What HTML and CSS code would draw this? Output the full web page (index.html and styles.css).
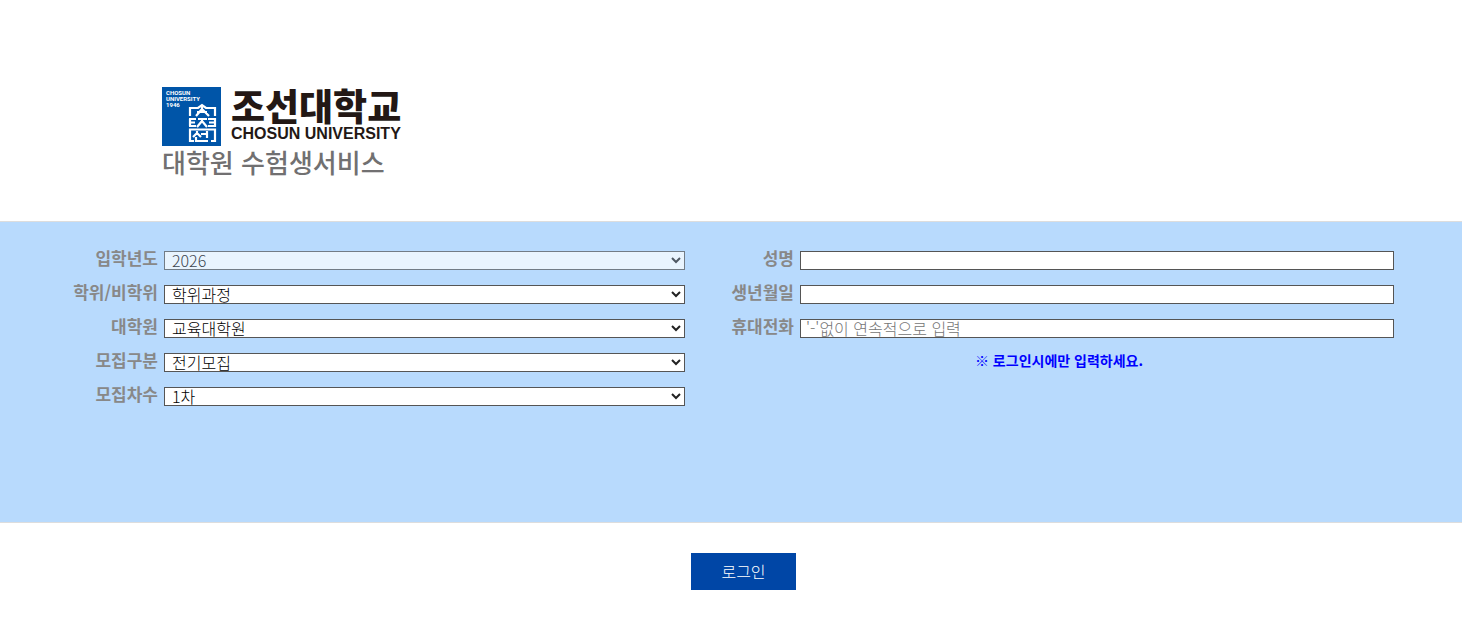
FILE: index.html
```html
<!DOCTYPE html>
<html lang="ko">

<head>
    <meta charset="UTF-8">
    <meta name="viewport" content="width=device-width, initial-scale=1.0">
    <title>조선대학교 대학원 수험생서비스</title>
    <link rel="stylesheet" href="styles.css">
</head>

<body>
    <header class="header">
        <div class="brand">
            <svg class="emblem" viewBox="0 0 59 59" aria-hidden="true">
                <rect width="59" height="59" fill="#0055a8"/>
                <g class="emblem-text">
                    <text x="4" y="8">CHOSUN</text>
                    <text x="4" y="14">UNIVERSITY</text>
                    <text x="4" y="20">1946</text>
                </g>
                <!-- top row, middle row, bottom row of the seal -->
                <g fill="none" stroke="#fff" stroke-width="2.2">
                    <path d="M28 29V21H36L40 18L44 21H53V29M40 18V22L34 29M40 22L47 29M35 25H45"/>
                    <path d="M27 32H34M27 35.500H33M27 39H34M28 32V39M36 32H45M40 32V34L35 40M40 34L45 40M46 32H53V39H46M47 35.500H53"/>
                    <path d="M32 54H28V42.500H53V54H49M35 44V46L31 50M35 46L39 50M39 47H44M45 44V51M34 50V54H46"/>
                </g>
            </svg>
            <div class="brand-name">
                <strong class="name-ko">조선대학교</strong>
                <span class="name-en">CHOSUN UNIVERSITY</span>
            </div>
        </div>
        <h1 class="service">대학원 수험생서비스</h1>
    </header>

    <form action="#" method="post">
        <div class="login-box">
            <div class="column left">
                <label for="year">입학년도</label>
                <select id="year" disabled><option>2026</option></select>
                <label for="degree">학위/비학위</label>
                <select id="degree"><option>학위과정</option></select>
                <label for="school">대학원</label>
                <select id="school"><option>교육대학원</option></select>
                <label for="term">모집구분</label>
                <select id="term"><option>전기모집</option></select>
                <label for="round">모집차수</label>
                <select id="round"><option>1차</option></select>
            </div>
            <div class="column right">
                <label for="name">성명</label>
                <input type="text" id="name">
                <label for="birth">생년월일</label>
                <input type="text" id="birth">
                <label for="phone">휴대전화</label>
                <input type="tel" id="phone" placeholder="'-'없이 연속적으로 입력">
                <p class="notice">※ 로그인시에만 입력하세요.</p>
            </div>
        </div>
        <div class="buttons">
            <button type="submit" class="login-button">로그인</button>
        </div>
    </form>
</body>

</html>
```
FILE: styles.css
```css
body {
    margin: 0;
    background-color: #fff;
    font-family: "Noto Sans CJK KR", sans-serif;
    font-size: 16px;
}

.header {
    padding: 87px 162px 43px;
}

.brand {
    display: flex;
    gap: 10px;
}

.emblem {
    width: 59px;
    height: 59px;
}

.emblem-text {
    fill: #fff;
    font: bold 6px Roboto, Arial, sans-serif;
}

.brand-name {
    display: flex;
    flex-direction: column;
    color: #231815;
}

.name-ko {
    font-size: 37px;
    font-weight: 900;
    line-height: 36px;
}

.name-en {
    font-family: "Liberation Sans", Arial, sans-serif;
    font-size: 16px;
    font-weight: bold;
    line-height: 22px;
}

.service {
    margin: 0;
    color: #717071;
    font-size: 26px;
    font-weight: 500;
    line-height: 32px;
}

.login-box {
    display: flex;
    box-sizing: border-box;
    min-height: 302px;
    padding: 29px 68px 0 0;
    background-color: #b8dafd;
    border-top: 1px solid #ddd;
    border-bottom: 1px solid #ddd;
}

.column {
    display: grid;
    grid-auto-rows: 19px;
    gap: 15px 6px;
}

.left {
    flex: 685;
    grid-template-columns: 158px 1fr;
}

.right {
    flex: 709;
    grid-template-columns: 109px 1fr;
}

label {
    color: #888;
    font-size: 17px;
    font-weight: bold;
    line-height: 14px;
    text-align: right;
}

select,
input {
    box-sizing: border-box;
    width: 100%;
    height: 19px;
    margin: 0;
    border: 1px solid #555;
    border-radius: 0;
    background-color: #fff;
    font-family: inherit;
    font-size: 16px;
    font-weight: 300;
}

select {
    appearance: none;
    padding: 0 20px 0 7px;
    background-image: url("data:image/svg+xml,%3Csvg xmlns='http://www.w3.org/2000/svg' width='10' height='7'%3E%3Cpath d='M1 1L5 5L9 1' fill='none' stroke='%23222' stroke-width='2'/%3E%3C/svg%3E");
    background-position: right 3px center;
    background-repeat: no-repeat;
    color: #000;
    line-height: 17px;
}

select:disabled {
    opacity: 0.7;
}

input {
    padding: 0 5px 2px;
}

input::placeholder {
    color: #757575;
}

.notice {
    grid-column: 2;
    margin: 0;
    padding-right: 76px;
    color: #00f;
    font-size: 14px;
    font-weight: bold;
    line-height: 14px;
    text-align: center;
}

.buttons {
    padding: 30px 0 48px 25px;
    text-align: center;
}

.login-button {
    height: 37px;
    padding: 0 30px 2px;
    border: 0;
    background-color: #0046a6;
    color: #fff;
    font-family: inherit;
    font-size: 16px;
    font-weight: 300;
    cursor: pointer;
}
```
